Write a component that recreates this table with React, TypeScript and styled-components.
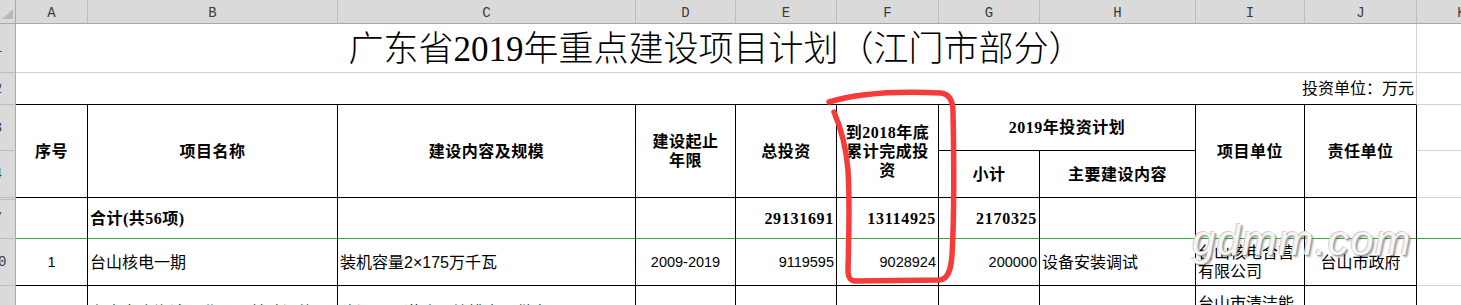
import React from "react";
import styled, { createGlobalStyle } from "styled-components";

const INK = "#000";
const GRID = "#d4d4d4";
const FREEZE = "#3da83d";
const SANS = `"Liberation Sans", "Noto Sans CJK SC", sans-serif`;
const SERIF = `"Liberation Serif", "Noto Sans CJK SC", serif`;

const GlobalStyle = createGlobalStyle`
  html, body { margin: 0; padding: 0; background: #fff; }
  body { font-family: ${SANS}; }
`;

const Screen = styled.div`
  position: relative;
  width: 1461px;
  height: 305px;
  overflow: hidden;
  background: #fff;
`;

// first column is the row header, pushed left so only its right part shows
const Sheet = styled.div`
  display: grid;
  grid-template-columns: 35px 72px 250px 298px 100px 101px 102px 101px 156px 109px 112px 90px;
  grid-template-rows: 24px 49px 32px 46px 47px 41px 47px 92px;
  margin-left: -19px;
  width: max-content;
`;

const Corner = styled.div`
  grid-column: 1;
  grid-row: 1;
  box-sizing: border-box;
  background: #dadada;
  border-right: 1px solid #a8a8a8;
  border-bottom: 1px solid #a8a8a8;
  display: flex;
  justify-content: flex-end;
  align-items: flex-end;
  padding: 0 2px 4px 0;
`;

const ColHead = styled.div<{ $c: number }>`
  grid-column: ${(p) => p.$c};
  grid-row: 1;
  box-sizing: border-box;
  background: #dadada;
  border-right: 1px solid #bdbdbd;
  border-bottom: 1px solid #a8a8a8;
  display: flex;
  justify-content: center;
  align-items: flex-end;
  padding-bottom: 2px;
  font-family: "Liberation Mono", monospace;
  font-size: 14px;
  line-height: 16px;
  color: #3c3c3c;
`;

const RowHead = styled.div<{ $r: number; $folded?: boolean }>`
  grid-column: 1;
  grid-row: ${(p) => p.$r};
  box-sizing: border-box;
  background: ${(p) =>
    p.$folded
      ? "linear-gradient(#dadada 0 1px, #bdbdbd 1px 2px, #dadada 2px)"
      : "#dadada"};
  border-right: 1px solid #a8a8a8;
  border-bottom: 1px solid #bdbdbd;
  display: flex;
  justify-content: center;
  align-items: center;
  font-family: "Liberation Mono", monospace;
  font-size: 14px;
  color: #3c3c3c;
`;

type CellProps = {
  $c: number;
  $r: number;
  $cs?: number;
  $rs?: number;
  $align?: "left" | "center" | "right";
  $right?: string;
  $under?: string;
  $bold?: boolean;
  $num?: boolean;
};

const justify = { left: "flex-start", center: "center", right: "flex-end" };

const Cell = styled.div<CellProps>`
  grid-column: ${(p) => `${p.$c} / span ${p.$cs ?? 1}`};
  grid-row: ${(p) => `${p.$r} / span ${p.$rs ?? 1}`};
  box-sizing: border-box;
  border-right: 1px solid ${(p) => p.$right ?? INK};
  border-bottom: 1px solid ${(p) => p.$under ?? INK};
  display: flex;
  align-items: center;
  justify-content: ${(p) => justify[p.$align ?? "left"]};
  text-align: ${(p) => p.$align ?? "left"};
  padding: 0 2px;
  overflow: hidden;
  color: #000;
  font-family: ${(p) => (p.$bold ? SERIF : SANS)};
  font-weight: ${(p) => (p.$bold ? 700 : 400)};
  font-size: ${(p) => (p.$num && !p.$bold ? "14.5px" : "16px")};
  letter-spacing: ${(p) => (p.$bold ? (p.$num ? "0.7px" : "0.5px") : "0")};
  line-height: 19px;
  white-space: ${(p) => (p.$num ? "nowrap" : "normal")};
`;

const Title = styled(Cell)`
  font-family: ${SERIF};
  font-size: 35px;
  font-weight: 300;
  line-height: 35px;
  padding-top: 3px;
  white-space: nowrap;
`;

const Watermark = styled.div`
  position: absolute;
  left: 1192px;
  top: 220px;
  font-family: "Liberation Sans", sans-serif;
  font-style: italic;
  font-size: 42px;
  line-height: 42px;
  letter-spacing: 1.5px;
  color: #f6f6f6;
  text-shadow: 1px 1px 0 #a0a0a0, 2px 2px 2px rgba(0, 0, 0, 0.35),
    -1px -1px 0 #d0d0d0;
  pointer-events: none;
`;

const Ink = styled.svg`
  position: absolute;
  left: 0;
  top: 0;
  pointer-events: none;
`;

const letters = ["A", "B", "C", "D", "E", "F", "G", "H", "I", "J", "K"];

const App: React.FC = () => {
  return (
    <>
      <GlobalStyle />
      <Screen>
        <Sheet>
          <Corner>
            <svg width="11" height="10" viewBox="0 0 11 10">
              <polygon points="0,10 11,10 11,0" fill="#b9b9b9" />
            </svg>
          </Corner>
          {letters.map((l, i) => (
            <ColHead key={l} $c={i + 2}>
              {l}
            </ColHead>
          ))}

          <RowHead $r={2}>1</RowHead>
          <RowHead $r={3}>2</RowHead>
          <RowHead $r={4}>3</RowHead>
          <RowHead $r={5}>4</RowHead>
          <RowHead $r={6} $folded>7</RowHead>
          <RowHead $r={7}>10</RowHead>
          <RowHead $r={8}>11</RowHead>

          {/* row 1 / 2 */}
          <Title $c={2} $cs={10} $r={2} $align="center" $right={GRID} $under={GRID}>
            广东省2019年重点建设项目计划（江门市部分）
          </Title>
          <Cell $c={12} $r={2} $right={GRID} $under={GRID} />
          <Cell $c={2} $cs={10} $r={3} $align="right" $right={GRID}>
            投资单位：万元
          </Cell>
          <Cell $c={12} $r={3} $right={GRID} $under={GRID} />

          {/* header */}
          <Cell $c={2} $r={4} $rs={2} $align="center" $bold>序号</Cell>
          <Cell $c={3} $r={4} $rs={2} $align="center" $bold>项目名称</Cell>
          <Cell $c={4} $r={4} $rs={2} $align="center" $bold>建设内容及规模</Cell>
          <Cell $c={5} $r={4} $rs={2} $align="center" $bold>
            建设起止
            <br />
            年限
          </Cell>
          <Cell $c={6} $r={4} $rs={2} $align="center" $bold>总投资</Cell>
          <Cell $c={7} $r={4} $rs={2} $align="center" $bold>
            到2018年底
            <br />
            累计完成投
            <br />
            资
          </Cell>
          <Cell $c={8} $cs={2} $r={4} $align="center" $bold>2019年投资计划</Cell>
          <Cell $c={8} $r={5} $align="center" $bold>小计</Cell>
          <Cell $c={9} $r={5} $align="center" $bold>主要建设内容</Cell>
          <Cell $c={10} $r={4} $rs={2} $align="center" $bold>项目单位</Cell>
          <Cell $c={11} $r={4} $rs={2} $align="center" $bold>责任单位</Cell>
          <Cell $c={12} $r={4} $right={GRID} $under={GRID} />
          <Cell $c={12} $r={5} $right={GRID} $under={GRID} />

          {/* total row */}
          <Cell $c={2} $r={6} $under={FREEZE} />
          <Cell $c={3} $r={6} $under={FREEZE} $bold>合计(共56项)</Cell>
          <Cell $c={4} $r={6} $under={FREEZE} />
          <Cell $c={5} $r={6} $under={FREEZE} />
          <Cell $c={6} $r={6} $under={FREEZE} $align="right" $bold $num>29131691</Cell>
          <Cell $c={7} $r={6} $under={FREEZE} $align="right" $bold $num>13114925</Cell>
          <Cell $c={8} $r={6} $under={FREEZE} $align="right" $bold $num>2170325</Cell>
          <Cell $c={9} $r={6} $under={FREEZE} />
          <Cell $c={10} $r={6} $under={FREEZE} />
          <Cell $c={11} $r={6} $under={FREEZE} />
          <Cell $c={12} $r={6} $under={FREEZE} $right={GRID} />

          {/* project 1 */}
          <Cell $c={2} $r={7} $align="center" $num>1</Cell>
          <Cell $c={3} $r={7}>台山核电一期</Cell>
          <Cell $c={4} $r={7}>装机容量2×175万千瓦</Cell>
          <Cell $c={5} $r={7} $align="center" $num>2009-2019</Cell>
          <Cell $c={6} $r={7} $align="right" $num>9119595</Cell>
          <Cell $c={7} $r={7} $align="right" $num>9028924</Cell>
          <Cell $c={8} $r={7} $align="right" $num>200000</Cell>
          <Cell $c={9} $r={7}>设备安装调试</Cell>
          <Cell $c={10} $r={7}>台山核电合营有限公司</Cell>
          <Cell $c={11} $r={7} $align="center">台山市政府</Cell>
          <Cell $c={12} $r={7} $right={GRID} $under={GRID} />

          {/* project 2 (cut off) */}
          <Cell $c={2} $r={8} />
          <Cell $c={3} $r={8}>
            台山市广海湾工业园区基础设施及配套工程建设项目（一期）及园区综合服务中心建设
          </Cell>
          <Cell $c={4} $r={8}>
            建设园区道路、给排水、供电
            <br />
            及通信等配套设施，总长约
            <br />
            30公里
          </Cell>
          <Cell $c={5} $r={8} />
          <Cell $c={6} $r={8} />
          <Cell $c={7} $r={8} />
          <Cell $c={8} $r={8} />
          <Cell $c={9} $r={8} />
          <Cell $c={10} $r={8}>台山市清洁能源投资有限公司项目管理部门</Cell>
          <Cell $c={11} $r={8} />
          <Cell $c={12} $r={8} $right={GRID} $under={GRID} />
        </Sheet>

        <Ink width="1461" height="305" viewBox="0 0 1461 305">
          <path
            d="M 829 102 C 858 93, 900 91, 941 93 C 949 94, 953 100, 953 112 C 954 160, 954 220, 952 255 C 951 270, 948 279, 940 280 L 856 281 C 850 281, 848 278, 848 270 C 849 232, 850 200, 848 170 C 846 145, 840 126, 834 112"
            fill="none"
            stroke="#f73b3b"
            strokeWidth="5.5"
            strokeLinecap="round"
            strokeLinejoin="round"
          />
        </Ink>
        <Watermark>gdmm.com</Watermark>
      </Screen>
    </>
  );
};

export default App;
